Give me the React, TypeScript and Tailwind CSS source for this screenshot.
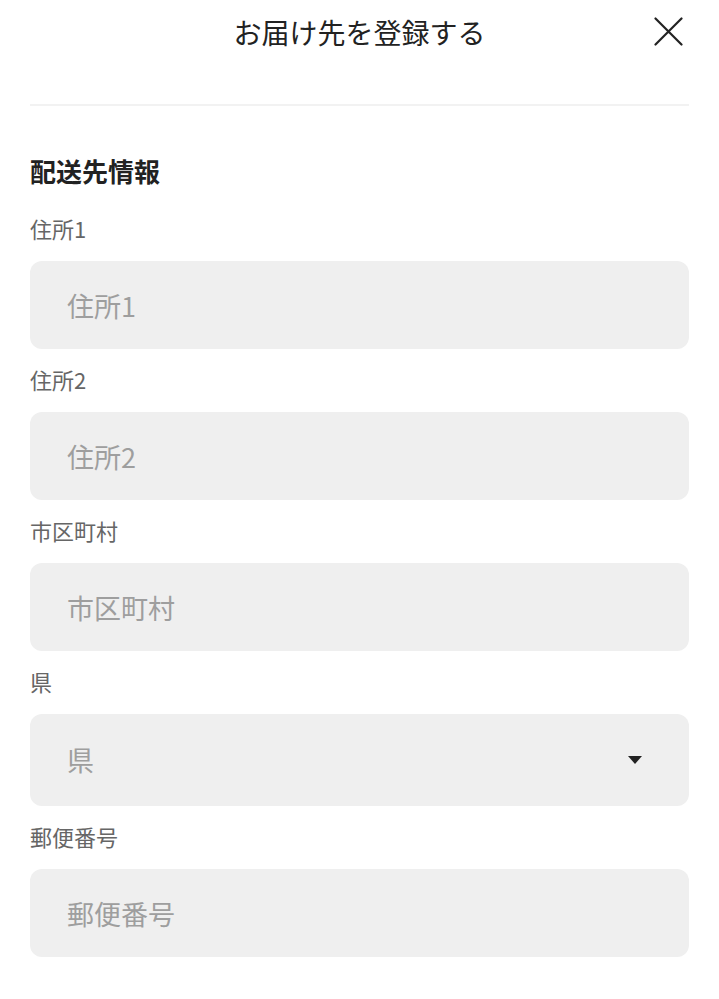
import type { ReactNode } from "react";

const fields = [
  { label: "住所1", placeholder: "住所1" },
  { label: "住所2", placeholder: "住所2" },
  { label: "市区町村", placeholder: "市区町村" },
];

function Field({ label, children }: { label: string; children: ReactNode }) {
  return (
    <div className="mt-4 first:mt-0">
      <label className="block text-[22px] leading-7 text-[#666]">{label}</label>
      <div className="mt-[19px]">{children}</div>
    </div>
  );
}

function TextInput({ placeholder }: { placeholder: string }) {
  return (
    <input
      type="text"
      placeholder={placeholder}
      className="block h-[88px] w-full rounded-[12px] bg-[#efefef] pl-[37px] pr-6 text-[27px] text-[#222] outline-none placeholder:text-[#9e9e9e]"
    />
  );
}

export default function App() {
  return (
    <div className="min-h-screen bg-white font-['Noto_Sans_CJK_JP','Noto_Sans',sans-serif]">
      <header className="relative flex h-16 items-center justify-center">
        <h1 className="text-[28px] leading-none text-[#222]">お届け先を登録する</h1>
        <button aria-label="閉じる" className="absolute right-[36px] top-[17px] h-[29px] w-[29px]">
          <svg viewBox="0 0 29 29" className="h-full w-full" fill="none" stroke="#222" strokeWidth="2.2" strokeLinecap="round">
            <path d="M1.5 1.5 27.5 27.5M27.5 1.5 1.5 27.5" />
          </svg>
        </button>
      </header>

      <div className="mx-[30px] mt-10 h-[2px] bg-[#f2f2f2]" />

      <main className="px-[30px]">
        <h2 className="mt-[49px] text-[26px] font-semibold leading-8 text-[#222]">配送先情報</h2>

        <div className="mt-[27px]">
          {fields.map((f) => (
            <Field key={f.label} label={f.label}>
              <TextInput placeholder={f.placeholder} />
            </Field>
          ))}

          <Field label="県">
            <div className="flex h-[92px] w-full items-center justify-between rounded-[12px] bg-[#efefef] pl-[37px] pr-[47px]">
              <span className="text-[27px] text-[#9e9e9e]">県</span>
              <svg viewBox="0 0 14 8" className="h-2 w-[14px]" fill="#222">
                <path d="M0 0h14L7 8z" />
              </svg>
            </div>
          </Field>

          <Field label="郵便番号">
            <TextInput placeholder="郵便番号" />
          </Field>
        </div>
      </main>
    </div>
  );
}
